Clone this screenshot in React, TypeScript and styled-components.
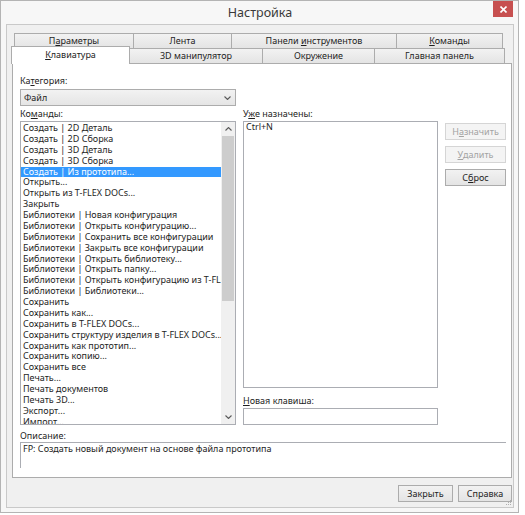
import { createGlobalStyle, styled } from "styled-components";

const GlobalStyle = createGlobalStyle`
  html, body {
    margin: 0;
    padding: 0;
    background: #ffffff;
  }
  body {
    font-family: "Noto Sans", "Open Sans", sans-serif;
    font-size: 9px;
    color: #1e1e1e;
  }
  * {
    box-sizing: border-box;
  }
`;

const Window = styled.div`
  width: 519px;
  height: 513px;
  border: 1px solid #b4b4b4;
  background: #f7f7f7;
  display: flex;
  flex-direction: column;
  padding: 0 4px 4px 5px;
`;

const TitleBar = styled.div`
  height: 23px;
  display: grid;
  grid-template-columns: 1fr auto 1fr;
  align-items: center;
`;

const Title = styled.div`
  grid-column: 2;
  font-size: 12.5px;
  color: #3a3a3a;
  line-height: 23px;
`;

const CloseButton = styled.div`
  grid-column: 3;
  justify-self: end;
  align-self: start;
  width: 20px;
  height: 16px;
  margin-right: 1px;
  background: #c75050;
  display: flex;
  align-items: center;
  justify-content: center;
`;

const Client = styled.div`
  flex: 1;
  position: relative;
  border: 1px solid #c9c9c9;
  background: #f0f0f0;
  padding: 8px 1px 0 5px;
  display: flex;
  flex-direction: column;
`;

const TabRow = styled.div<{ $indent: number; $lower?: boolean }>`
  display: flex;
  align-items: flex-end;
  height: 16px;
  margin-left: ${(p) => p.$indent}px;
  margin-top: ${(p) => (p.$lower ? -1 : 0)}px;
  position: relative;
  z-index: ${(p) => (p.$lower ? 2 : 1)};
`;

const Tab = styled.div<{ $w: number; $active?: boolean }>`
  width: ${(p) => p.$w}px;
  height: ${(p) => (p.$active ? 18 : 16)}px;
  margin-left: -1px;
  border: 1px solid #acacac;
  border-bottom: ${(p) => (p.$active ? "none" : "1px solid #acacac")};
  background: ${(p) =>
    p.$active ? "#ffffff" : "linear-gradient(#f2f2f2, #e4e4e4)"};
  text-align: center;
  line-height: ${(p) => (p.$active ? 15 : 14)}px;
  white-space: nowrap;
  position: relative;
  z-index: ${(p) => (p.$active ? 3 : 1)};
`;

const Mn = styled.span`
  text-decoration: underline;
  text-underline-offset: 1px;
`;

const Panel = styled.div`
  margin-top: -1px;
  background: #ffffff;
  border: 1px solid #acacac;
  padding: 11px 5px 9px 7px;
  position: relative;
  z-index: 1;
`;

const TopGrid = styled.div`
  display: grid;
  grid-template-columns: 216px 195px 61px;
  column-gap: 7px;
`;

const Label = styled.div<{ $gap?: number; $top?: number }>`
  height: 12px;
  line-height: 12px;
  margin-top: ${(p) => p.$top ?? 0}px;
  margin-bottom: ${(p) => p.$gap ?? 1}px;
  white-space: nowrap;
`;

const CategoryBlock = styled.div`
  grid-column: 1 / 2;
`;

const Combo = styled.div`
  height: 17px;
  margin-bottom: 2px;
  border: 1px solid #acacac;
  background: linear-gradient(#f2f2f2, #e5e5e5);
  display: flex;
  align-items: center;
  justify-content: space-between;
  padding: 0 4px 0 3px;
`;

const ListBox = styled.div`
  height: 304px;
  border: 1px solid #abadb3;
  background: #ffffff;
  display: flex;
`;

const Items = styled.div`
  flex: 1;
  overflow: hidden;
  padding-top: 1px;
`;

const Item = styled.div<{ $selected?: boolean }>`
  height: 10.88px;
  line-height: 10.88px;
  padding: 0 2px;
  white-space: nowrap;
  background: ${(p) => (p.$selected ? "#3399ff" : "transparent")};
  color: ${(p) => (p.$selected ? "#ffffff" : "#1e1e1e")};
`;

const ScrollBar = styled.div`
  width: 14px;
  background: #f0f0f0;
  display: flex;
  flex-direction: column;
`;

const ScrollArrow = styled.div`
  height: 14px;
  display: flex;
  align-items: center;
  justify-content: center;
`;

const Thumb = styled.div`
  height: 165px;
  margin: 0 1px;
  background: #cdcdcd;
`;

const Track = styled.div`
  flex: 1;
`;

const RightStack = styled.div`
  display: flex;
  flex-direction: column;
`;

const AssignedBox = styled.div`
  flex: 1;
  border: 1px solid #abadb3;
  padding: 0 2px;
  line-height: 10.88px;
`;

const Input = styled.div`
  height: 17px;
  border: 1px solid #abadb3;
  background: #ffffff;
`;

const ButtonStack = styled.div`
  display: flex;
  flex-direction: column;
  gap: 6px;
  margin-top: 2px;
`;

const Button = styled.div<{ $disabled?: boolean; $w?: number }>`
  height: 17px;
  width: ${(p) => (p.$w ? `${p.$w}px` : "auto")};
  border: 1px solid ${(p) => (p.$disabled ? "#d5d5d5" : "#acacac")};
  background: ${(p) =>
    p.$disabled ? "#f4f4f4" : "linear-gradient(#f2f2f2, #e4e4e4)"};
  color: ${(p) => (p.$disabled ? "#a3a3a3" : "#1e1e1e")};
  display: flex;
  align-items: center;
  justify-content: center;
  white-space: nowrap;
`;

const DescBox = styled.div`
  height: 26px;
  border-top: 1px solid #abadb3;
  border-left: 1px solid #abadb3;
  padding: 0 2px;
  line-height: 11px;
  white-space: nowrap;
`;

const BottomBar = styled.div`
  display: flex;
  justify-content: flex-end;
  gap: 5px;
  margin-top: 7px;
`;

const Grip = styled.svg`
  position: absolute;
  right: 1px;
  bottom: 1px;
`;

const Chevron = ({ up }: { up?: boolean }) => (
  <svg width="7" height="4" viewBox="0 0 7 4">
    <polyline
      points={up ? "0.5,3.5 3.5,0.5 6.5,3.5" : "0.5,0.5 3.5,3.5 6.5,0.5"}
      fill="none"
      stroke="#5a5a5a"
      strokeWidth="1.1"
    />
  </svg>
);

const commands = [
  "Создать | 2D Деталь",
  "Создать | 2D Сборка",
  "Создать | 3D Деталь",
  "Создать | 3D Сборка",
  "Создать | Из прототипа...",
  "Открыть...",
  "Открыть из T-FLEX DOCs...",
  "Закрыть",
  "Библиотеки | Новая конфигурация",
  "Библиотеки | Открыть конфигурацию...",
  "Библиотеки | Сохранить все конфигурации",
  "Библиотеки | Закрыть все конфигурации",
  "Библиотеки | Открыть библиотеку...",
  "Библиотеки | Открыть папку...",
  "Библиотеки | Открыть конфигурацию из T-FLEX DOCs...",
  "Библиотеки | Библиотеки...",
  "Сохранить",
  "Сохранить как...",
  "Сохранить в T-FLEX DOCs...",
  "Сохранить структуру изделия в T-FLEX DOCs...",
  "Сохранить как прототип...",
  "Сохранить копию...",
  "Сохранить все",
  "Печать...",
  "Печать документов",
  "Печать 3D...",
  "Экспорт...",
  "Импорт...",
  "Свойства документа...",
];

export default function App() {
  return (
    <>
      <GlobalStyle />
      <Window>
        <TitleBar>
          <Title>Настройка</Title>
          <CloseButton>
            <svg width="7" height="7" viewBox="0 0 7 7">
              <path d="M0.5 0.5 L6.5 6.5 M6.5 0.5 L0.5 6.5" stroke="#ffffff" strokeWidth="1.6" />
            </svg>
          </CloseButton>
        </TitleBar>
        <Client>
          <TabRow $indent={3}>
            <Tab $w={120}>
              П<Mn>а</Mn>раметры
            </Tab>
            <Tab $w={99}>Лента</Tab>
            <Tab $w={166}>
              Панели <Mn>и</Mn>нструментов
            </Tab>
            <Tab $w={107}>
              <Mn>К</Mn>оманды
            </Tab>
          </TabRow>
          <TabRow $indent={0} $lower>
            <Tab $w={119} $active>
              <Mn>К</Mn>лавиатура
            </Tab>
            <Tab $w={134}>3D манипулятор</Tab>
            <Tab $w={113}>Окружение</Tab>
            <Tab $w={131}>Главная панель</Tab>
          </TabRow>
          <Panel>
            <TopGrid>
              <CategoryBlock>
                <Label $gap={2}>
                  Ка<Mn>т</Mn>егория:
                </Label>
                <Combo>
                  <span>Файл</span>
                  <Chevron />
                </Combo>
              </CategoryBlock>
              <div />
              <div />
              <Label>
                Ко<Mn>м</Mn>анды:
              </Label>
              <Label>
                У<Mn>ж</Mn>е назначены:
              </Label>
              <div />
              <ListBox>
                <Items>
                  {commands.map((c, i) => (
                    <Item key={c} $selected={i === 4}>
                      {c}
                    </Item>
                  ))}
                </Items>
                <ScrollBar>
                  <ScrollArrow>
                    <Chevron up />
                  </ScrollArrow>
                  <Thumb />
                  <Track />
                  <ScrollArrow>
                    <Chevron />
                  </ScrollArrow>
                </ScrollBar>
              </ListBox>
              <RightStack>
                <AssignedBox>Ctrl+N</AssignedBox>
                <Label $top={7}>
                  <Mn>Н</Mn>овая клавиша:
                </Label>
                <Input />
              </RightStack>
              <ButtonStack>
                <Button $disabled>
                  Н<Mn>а</Mn>значить
                </Button>
                <Button $disabled>
                  <Mn>У</Mn>далить
                </Button>
                <Button>
                  С<Mn>б</Mn>рос
                </Button>
              </ButtonStack>
            </TopGrid>
            <Label $top={5} $gap={0}>
              Описание:
            </Label>
            <DescBox>FP: Создать новый документ на основе файла прототипа</DescBox>
          </Panel>
          <BottomBar>
            <Button $w={55}>Закрыть</Button>
            <Button $w={54}>Справка</Button>
          </BottomBar>
          <Grip width="7" height="7" viewBox="0 0 7 7">
            {[
              [5, 1],
              [3, 3],
              [5, 3],
              [1, 5],
              [3, 5],
              [5, 5],
            ].map(([x, y]) => (
              <rect key={`${x}-${y}`} x={x} y={y} width="1" height="1" fill="#b0b0b0" />
            ))}
          </Grip>
        </Client>
      </Window>
    </>
  );
}
